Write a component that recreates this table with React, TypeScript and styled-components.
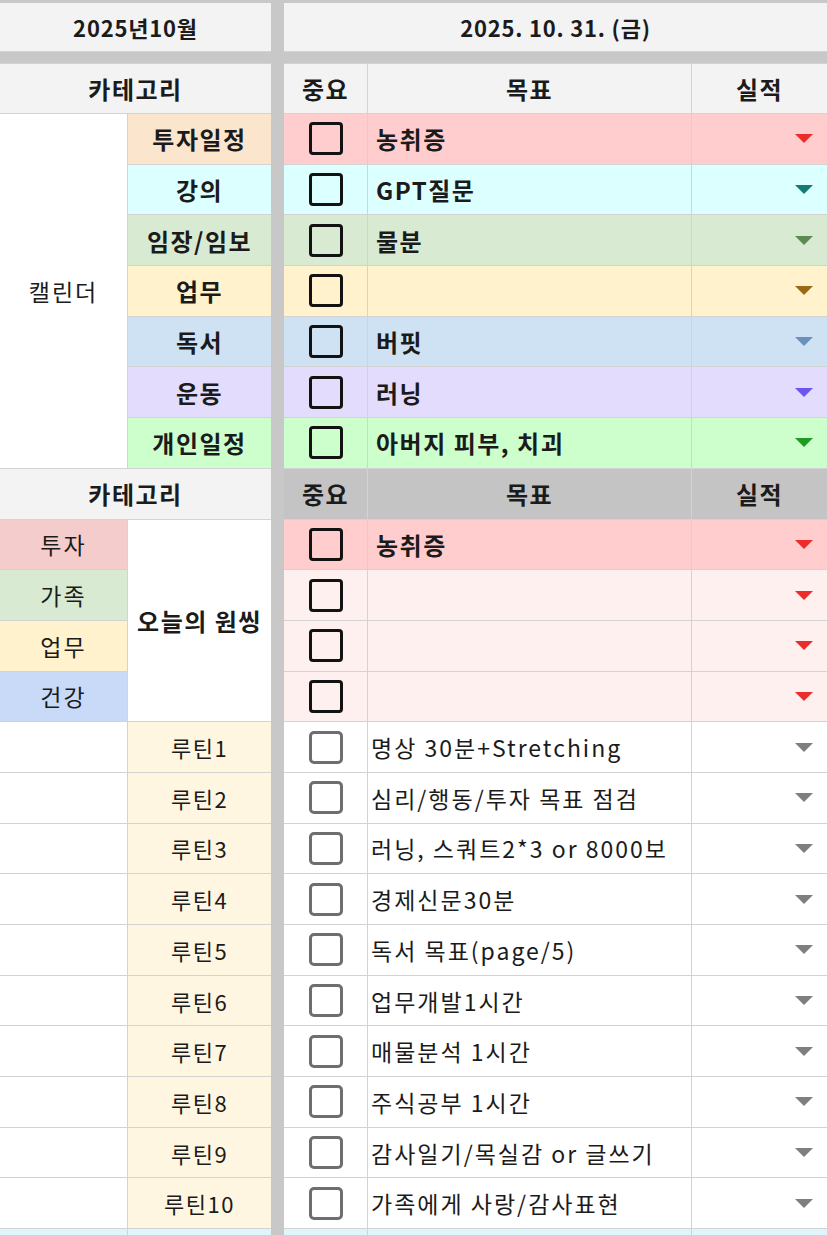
import React from 'react';
import styled, { createGlobalStyle, css } from 'styled-components';

const GlobalStyle = createGlobalStyle`
  html, body { margin: 0; padding: 0; background: #ffffff; }
  body {
    font-family: "Noto Sans CJK KR", "Noto Sans", sans-serif;
    color: #1b1b1b;
  }
`;

const ROW_TEMPLATE = '48px 11px 49px repeat(22, 49.7px) 40px';

const Sheet = styled.div`
  display: flex;
  gap: 13px;
  padding-top: 3px;
  width: 827px;
  height: 1235px;
  box-sizing: border-box;
  overflow: hidden;
  background: #c8c8c8;
`;

const Panel = styled.div<{ $cols: string; $grow?: boolean }>`
  display: grid;
  grid-template-columns: ${(p) => p.$cols};
  grid-template-rows: ${ROW_TEMPLATE};
  gap: 1px;
  align-content: start;
  background: #d3d3d3;
  ${(p) => (p.$grow ? 'flex: 1;' : 'flex: none;')}
`;

const Cell = styled.div<{ $bg?: string; $span?: number; $rows?: number }>`
  display: flex;
  align-items: center;
  justify-content: center;
  min-width: 0;
  overflow: hidden;
  white-space: nowrap;
  background: ${(p) => p.$bg ?? '#ffffff'};
  ${(p) => p.$span && css`grid-column: span ${p.$span};`}
  ${(p) => p.$rows && css`grid-row: span ${p.$rows};`}
`;

const TitleCell = styled(Cell)`
  background: #f3f3f3;
  font-size: 22px;
  font-weight: 700;
  letter-spacing: 0.8px;
`;

const Band = styled(Cell)`
  background: #c8c8c8;
`;

const HeaderCell = styled(Cell)<{ $dark?: boolean }>`
  background: ${(p) => (p.$dark ? '#c4c4c4' : '#f3f3f3')};
  font-size: 24px;
  font-weight: 700;
  letter-spacing: 1.5px;
`;

const SideLabel = styled(Cell)`
  font-size: 23px;
  font-weight: 400;
  letter-spacing: 2px;
`;

const CategoryCell = styled(Cell)`
  font-size: 24px;
  font-weight: 700;
  letter-spacing: 1.5px;
`;

const AreaCell = styled(Cell)`
  font-size: 23px;
  font-weight: 400;
  letter-spacing: 2px;
`;

const OneThingLabel = styled(Cell)`
  font-size: 24px;
  font-weight: 700;
  letter-spacing: 1.5px;
`;

const RoutineLabel = styled(Cell)`
  background: #fff6e2;
  font-size: 22px;
  font-weight: 400;
  letter-spacing: 1.5px;
`;

const CheckCell = styled(Cell)``;

const Box = styled.span<{ $muted?: boolean }>`
  display: block;
  width: 34px;
  height: 33px;
  box-sizing: border-box;
  border: 3px solid ${(p) => (p.$muted ? '#6e6e6e' : '#121212')};
  border-radius: ${(p) => (p.$muted ? '5px' : '4px')};
`;

const GoalCell = styled(Cell)<{ $light?: boolean }>`
  justify-content: flex-start;
  padding-left: ${(p) => (p.$light ? '3px' : '8px')};
  font-size: ${(p) => (p.$light ? '23px' : '24px')};
  font-weight: ${(p) => (p.$light ? 400 : 700)};
  letter-spacing: ${(p) => (p.$light ? '2px' : '1.5px')};
`;

const ResultCell = styled(Cell)`
  justify-content: flex-end;
  padding-right: 14px;
`;

const Caret = styled.span<{ $color: string }>`
  display: block;
  width: 0;
  height: 0;
  border-left: 9px solid transparent;
  border-right: 9px solid transparent;
  border-top: 9px solid ${(p) => p.$color};
`;

const TailCell = styled(Cell)`
  background: #ddf5fb;
`;

type CalRow = { label: string; cat: string; row: string; goal: string; caret: string };

const calendar: CalRow[] = [
  { label: '투자일정', cat: '#fce5cd', row: '#ffcdcd', goal: '농취증', caret: '#ee2b2b' },
  { label: '강의', cat: '#dcffff', row: '#dcffff', goal: 'GPT질문', caret: '#137a78' },
  { label: '임장/임보', cat: '#d9ead3', row: '#d9ead3', goal: '물분', caret: '#5d8a53' },
  { label: '업무', cat: '#fff2cc', row: '#fff2cc', goal: '', caret: '#9a6a12' },
  { label: '독서', cat: '#cfe2f3', row: '#cfe2f3', goal: '버핏', caret: '#6b8fbe' },
  { label: '운동', cat: '#e3dcfd', row: '#e3dcfd', goal: '러닝', caret: '#6b54f0' },
  { label: '개인일정', cat: '#ccffcc', row: '#ccffcc', goal: '아버지 피부, 치괴', caret: '#1f9a22' },
];

const areas = [
  { label: '투자', bg: '#f4cccc' },
  { label: '가족', bg: '#d9ead3' },
  { label: '업무', bg: '#fff2cc' },
  { label: '건강', bg: '#c9daf8' },
];

const oneThing = [
  { goal: '농취증', bg: '#ffcdcd' },
  { goal: '', bg: '#fff0f0' },
  { goal: '', bg: '#fff0f0' },
  { goal: '', bg: '#fff0f0' },
];

const routines = [
  '명상 30분+Stretching',
  '심리/행동/투자 목표 점검',
  '러닝, 스쿼트2*3 or 8000보',
  '경제신문30분',
  '독서 목표(page/5)',
  '업무개발1시간',
  '매물분석 1시간',
  '주식공부 1시간',
  '감사일기/목실감 or 글쓰기',
  '가족에게 사랑/감사표현',
];

export default function App() {
  return (
    <>
      <GlobalStyle />
      <Sheet>
        <Panel $cols="127px 143px">
          <TitleCell $span={2}>2025년10월</TitleCell>
          <Band $span={2} />
          <HeaderCell $span={2}>카테고리</HeaderCell>
          <SideLabel $rows={7}>캘린더</SideLabel>
          {calendar.map((c) => (
            <CategoryCell key={c.label} $bg={c.cat}>
              {c.label}
            </CategoryCell>
          ))}
          <HeaderCell $span={2}>카테고리</HeaderCell>
          {areas.map((a, i) => (
            <React.Fragment key={a.label}>
              <AreaCell $bg={a.bg}>{a.label}</AreaCell>
              {i === 0 && <OneThingLabel $rows={4}>오늘의 원씽</OneThingLabel>}
            </React.Fragment>
          ))}
          {routines.map((_, i) => (
            <React.Fragment key={i}>
              <Cell />
              <RoutineLabel>루틴{i + 1}</RoutineLabel>
            </React.Fragment>
          ))}
          <TailCell />
          <TailCell />
        </Panel>
        <Panel $cols="83px 323px 1fr" $grow>
          <TitleCell $span={3}>2025. 10. 31. (금)</TitleCell>
          <Band $span={3} />
          <HeaderCell>중요</HeaderCell>
          <HeaderCell>목표</HeaderCell>
          <HeaderCell>실적</HeaderCell>
          {calendar.map((c) => (
            <React.Fragment key={c.label}>
              <CheckCell $bg={c.row}>
                <Box />
              </CheckCell>
              <GoalCell $bg={c.row}>{c.goal}</GoalCell>
              <ResultCell $bg={c.row}>
                <Caret $color={c.caret} />
              </ResultCell>
            </React.Fragment>
          ))}
          <HeaderCell $dark>중요</HeaderCell>
          <HeaderCell $dark>목표</HeaderCell>
          <HeaderCell $dark>실적</HeaderCell>
          {oneThing.map((o, i) => (
            <React.Fragment key={i}>
              <CheckCell $bg={o.bg}>
                <Box />
              </CheckCell>
              <GoalCell $bg={o.bg}>{o.goal}</GoalCell>
              <ResultCell $bg={o.bg}>
                <Caret $color="#ee2b2b" />
              </ResultCell>
            </React.Fragment>
          ))}
          {routines.map((r, i) => (
            <React.Fragment key={i}>
              <CheckCell>
                <Box $muted />
              </CheckCell>
              <GoalCell $light>{r}</GoalCell>
              <ResultCell>
                <Caret $color="#7f7f7f" />
              </ResultCell>
            </React.Fragment>
          ))}
          <TailCell />
          <TailCell />
          <TailCell />
        </Panel>
      </Sheet>
    </>
  );
}
